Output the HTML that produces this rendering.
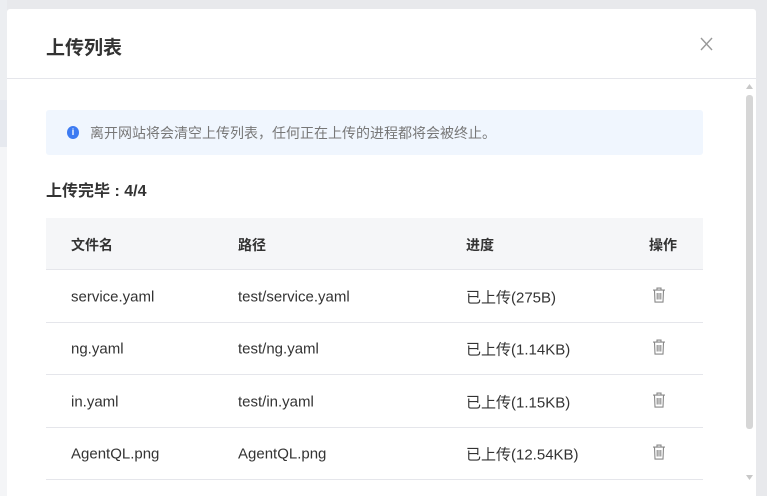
<!DOCTYPE html>
<html><head><meta charset="utf-8"><style>
*{margin:0;padding:0;box-sizing:border-box}
html{overflow:hidden;height:496px}
body{width:767px;height:496px;overflow:hidden;background:#e8e9ec;position:relative;font-family:"Liberation Sans","Noto Sans CJK SC",sans-serif;color:#333}
.lstrip{position:absolute;left:0;width:7px;background:#f5f6f8}
.modal{position:absolute;left:7px;top:9px;width:749px;height:487px;background:#fff;border-radius:3px 3px 0 0;overflow:hidden}
.hd{height:70px;border-bottom:1px solid #e5e6eb;position:relative}
.title{position:absolute;left:39px;top:24px;font-size:19px;font-weight:bold;color:#333}
.close{position:absolute;left:693px;top:28px;width:13px;height:14px}
.alert{position:absolute;left:39px;top:101px;width:657px;height:45px;background:#f0f6fe;border-radius:3px}
.alert .ic{position:absolute;left:21px;top:16px;width:12px;height:13px;border-radius:50%;background:#3d7bf2;color:#fff;font-size:9px;text-align:center;line-height:13px;font-weight:bold}
.alert .t{position:absolute;left:44px;top:13px;font-size:14px;color:#777}
.cnt{position:absolute;left:39px;top:168px;font-size:16px;font-weight:bold;color:#333}
.tbl{position:absolute;left:39px;top:209px;width:657px}
.row{height:52.5px;border-bottom:1px solid #e5e6eb;position:relative;font-size:15px;color:#333}
.row.h{background:#f5f6f8;font-size:14px;font-weight:bold;height:52px}
.row span{position:absolute;top:50%;transform:translateY(-45%);white-space:nowrap}
.c1{left:25px}.c2{left:192px}.c3{left:420px}.c4{left:606px}
.thumb{position:absolute;left:739px;top:86px;width:7px;height:334px;background:#d6d6d6;border-radius:3px}
</style></head><body>
<div class="lstrip" style="top:0;height:100px;background:#eceef1"></div>
<div class="lstrip" style="top:100px;height:47px;background:#e6e9ef"></div>
<div class="lstrip" style="top:147px;height:349px;background:#f4f5f7"></div>
<div class="modal">
<div class="hd"><div class="title">上传列表</div>
<svg class="close" viewBox="0 0 13 14"><path d="M1 1L12 13M12 1L1 13" stroke="#999" stroke-width="1.4" fill="none"/></svg></div>
<div class="alert"><div class="ic">i</div><div class="t">离开网站将会清空上传列表，任何正在上传的进程都将会被终止。</div></div>
<div class="cnt">上传完毕 : 4/4</div>
<div class="tbl">
<div class="row h"><span class="c1">文件名</span><span class="c2">路径</span><span class="c3">进度</span><span class="c4" style="left:603px">操作</span></div>
<div class="row"><span class="c1">service.yaml</span><span class="c2">test/service.yaml</span><span class="c3">已上传(275B)</span><span class="c4"><svg width="14" height="17" viewBox="0 0 14 17"><path d="M1 3.5H13M5 3.5V1.5H9V3.5M2.5 4L3 15.5H11L11.5 4M5.2 6.5V13M7 6.5V13M8.8 6.5V13" stroke="#888" stroke-width="1.1" fill="none"/></svg></span></div>
<div class="row"><span class="c1">ng.yaml</span><span class="c2">test/ng.yaml</span><span class="c3">已上传(1.14KB)</span><span class="c4"><svg width="14" height="17" viewBox="0 0 14 17"><path d="M1 3.5H13M5 3.5V1.5H9V3.5M2.5 4L3 15.5H11L11.5 4M5.2 6.5V13M7 6.5V13M8.8 6.5V13" stroke="#888" stroke-width="1.1" fill="none"/></svg></span></div>
<div class="row"><span class="c1">in.yaml</span><span class="c2">test/in.yaml</span><span class="c3">已上传(1.15KB)</span><span class="c4"><svg width="14" height="17" viewBox="0 0 14 17"><path d="M1 3.5H13M5 3.5V1.5H9V3.5M2.5 4L3 15.5H11L11.5 4M5.2 6.5V13M7 6.5V13M8.8 6.5V13" stroke="#888" stroke-width="1.1" fill="none"/></svg></span></div>
<div class="row"><span class="c1">AgentQL.png</span><span class="c2">AgentQL.png</span><span class="c3">已上传(12.54KB)</span><span class="c4"><svg width="14" height="17" viewBox="0 0 14 17"><path d="M1 3.5H13M5 3.5V1.5H9V3.5M2.5 4L3 15.5H11L11.5 4M5.2 6.5V13M7 6.5V13M8.8 6.5V13" stroke="#888" stroke-width="1.1" fill="none"/></svg></span></div>
</div>
<div class="thumb"></div>
<svg style="position:absolute;left:738px;top:74px" width="9" height="7"><path d="M1 6L4.5 1L8 6Z" fill="#c8c8c8"/></svg>
<svg style="position:absolute;left:738px;top:465px" width="9" height="7"><path d="M1 1L4.5 6L8 1Z" fill="#c8c8c8"/></svg>
</div>
</body></html>
